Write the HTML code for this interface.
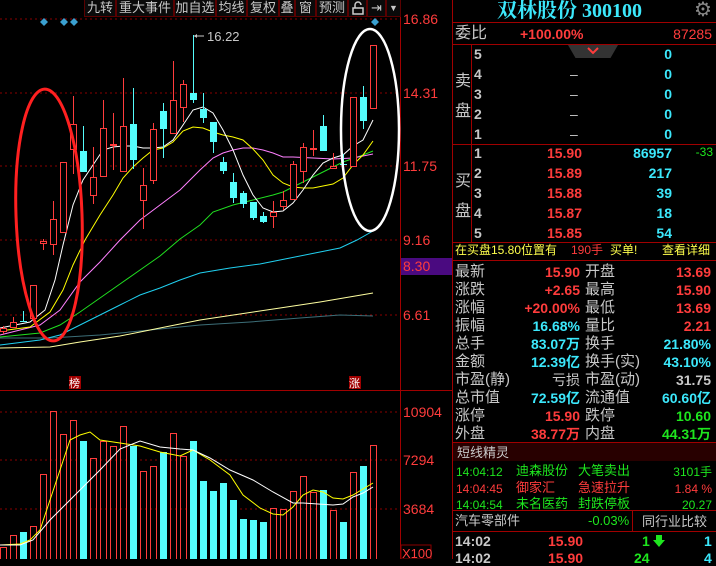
<!DOCTYPE html><html><head><meta charset="utf-8"><style>
*{margin:0;padding:0;box-sizing:border-box}
body{width:716px;height:559px;background:#000;overflow:hidden;position:relative;font-family:"Liberation Sans","Noto Sans CJK SC",sans-serif;color:#c8c8c8}
.a{position:absolute;white-space:nowrap;line-height:1}
.r{color:#ff3c3c}.c{color:#3ce8fc}.g{color:#1ee61e}.w{color:#c8c8c8}.y{color:#ffff4c}
.tb{position:absolute;top:0;height:17px;border:1px solid #5a0000;border-top:none;background:#0a0a0a;color:#c8c8c8;font-size:13px;text-align:center;line-height:16px}
.b{font-weight:bold}
</style></head><body>
<svg width="452" height="559" style="position:absolute;left:0;top:0">
<g stroke="#8a0000" stroke-dasharray="2,3" stroke-width="1">
<line x1="0" y1="19" x2="400" y2="19"/><line x1="0" y1="93" x2="400" y2="93"/><line x1="0" y1="166" x2="400" y2="166"/><line x1="0" y1="240" x2="400" y2="240"/><line x1="0" y1="315" x2="400" y2="315"/>
<line x1="0" y1="412" x2="400" y2="412"/><line x1="0" y1="460" x2="400" y2="460"/><line x1="0" y1="509" x2="400" y2="509"/>
</g>
<line x1="400.5" y1="0" x2="400.5" y2="559" stroke="#a00000"/>
<line x1="0" y1="390.5" x2="452" y2="390.5" stroke="#a00000"/>
<rect x="401" y="258" width="51" height="17" fill="#4a0a80"/>
<g font-family="Liberation Sans" font-size="14" fill="#ff3c3c">
<text x="403" y="24">16.86</text><text x="403" y="98">14.31</text><text x="403" y="171">11.75</text><text x="403" y="245">9.16</text><text x="403" y="271">8.30</text><text x="403" y="320">6.61</text>
<text x="403" y="417">10904</text><text x="403" y="465">7294</text><text x="403" y="514">3684</text></g>
<rect x="401" y="545" width="30" height="14" fill="none" stroke="#8a0000"/>
<text x="402" y="558" font-size="13" fill="#ff3c3c" font-family="Liberation Sans">X100</text>
<g fill="#3aa0d0"><path d="M44 18l4 4-4 4-4-4z"/><path d="M64 18l4 4-4 4-4-4z"/><path d="M74 18l4 4-4 4-4-4z"/><path d="M375 18l4 4-4 4-4-4z"/></g>
<g fill="none" stroke-width="1">
<polyline stroke="#3c6e78" points="0,338 50,338 100,335 150,330 200,325 250,322 300,318 340,315 373,316"/>
<polyline stroke="#ffffa0" points="0,348 50,347 80,342 120,336 160,328 200,320 240,314 280,308 320,302 373,293"/>
<polyline stroke="#20d0f0" points="0,345 40,340 60,335 80,325 100,315 120,305 140,295 160,288 180,280 200,273 230,268 260,264 290,258 320,252 340,248 357,240 373,231"/>
<polyline stroke="#20e020" points="0,337 40,333 60,325 80,312 100,298 120,284 140,270 160,256 180,239 200,225 213,212 233,205 253,200 273,195 283,192 303,182 323,172 343,162 363,155 373,151"/>
<polyline stroke="#ff80ff" points="0,335 40,325 60,310 80,282 100,262 120,240 140,220 160,205 180,190 200,170 213,158 223,153 233,150 243,148 253,148 263,150 273,153 283,157 293,157 313,158 333,159 353,158 373,154"/>
<polyline stroke="#ffff00" points="0,331 30,327 50,312 63,290 73,265 85,240 100,215 113,195 123,178 133,167 143,158 153,150 163,148 173,142 183,131 193,127 203,128 213,132 223,135 233,137 243,140 253,149 263,160 273,175 283,183 293,187 303,188 313,188 323,186 333,184 343,178 353,165 363,155 373,141"/>
<polyline stroke="#ffffff" points="0,328 30,322 45,310 55,280 63,245 73,205 83,180 93,165 103,150 113,147 123,146 133,146 143,148 153,148 163,147 173,140 183,125 193,110 203,107 213,113 223,130 233,150 243,175 253,195 263,208 273,212 283,211 293,203 303,190 313,175 323,163 333,158 343,155 353,146 363,140 373,120"/>
</g>
<g id="cd" stroke-width="1"></g>
<g id="vb"></g>
<g fill="none" stroke-width="1">
<polyline stroke="#ffff00" points="0,545 20,544 30,540 40,530 50,500 60,470 70,440 80,435 90,432 100,440 120,443 140,446 160,452 180,456 193,450 210,460 230,475 243,495 260,508 273,514 283,515 293,507 303,495 313,490 323,492 333,498 343,499 353,495 363,489 373,483"/>
<polyline stroke="#ffffff" points="0,545 20,545 33,540 50,520 70,500 85,485 100,470 120,449 140,441 160,447 180,449 193,450 210,458 230,470 253,480 273,492 293,503 303,503 333,505 343,504 353,497 363,493 373,487"/>
</g>
<ellipse cx="49" cy="215" rx="33" ry="126" fill="none" stroke="#ff2020" stroke-width="3" transform="rotate(-2 49 215)"/>
<ellipse cx="370" cy="130" rx="29" ry="101" fill="none" stroke="#ffffff" stroke-width="2.5"/>
<line x1="193.5" y1="35" x2="193.5" y2="93" stroke="#54fcfc"/>
<line x1="194" y1="36" x2="204" y2="36" stroke="#c8c8c8"/><path d="M194 36l3-2v4z" fill="#c8c8c8"/>
<text x="207" y="41" font-size="13" fill="#c8c8c8" font-family="Liberation Sans">16.22</text>
<rect x="69" y="376" width="12" height="13" fill="#a00000"/><text x="69" y="387" font-size="11" fill="#fff" font-family="Noto Sans CJK SC">榜</text>
<rect x="349" y="376" width="12" height="13" fill="#a00000"/><text x="349" y="387" font-size="11" fill="#fff" font-family="Noto Sans CJK SC">涨</text>
</svg>
<div class="tb" style="left:84px;width:32px">九转</div>
<div class="tb" style="left:116px;width:58px">重大事件</div>
<div class="tb" style="left:174px;width:42px">加自选</div>
<div class="tb" style="left:216px;width:31px">均线</div>
<div class="tb" style="left:247px;width:32px">复权</div>
<div class="tb" style="left:279px;width:16px">叠</div>
<div class="tb" style="left:295px;width:21px">窗</div>
<div class="tb" style="left:316px;width:32px">预测</div>
<div class="tb" style="left:348px;width:19px"><svg width="12" height="14" style="margin-top:1px"><path d="M3 7V4a3 3 0 0 1 6 0" fill="none" stroke="#ccc" stroke-width="1.5"/><rect x="1" y="7" width="10" height="6" fill="none" stroke="#ccc" stroke-width="1.5"/></svg></div>
<div class="tb" style="left:367px;width:19px">⇥</div>
<div class="tb" style="left:386px;width:15px;font-size:9px">▼</div>

<div style="position:absolute;left:452px;top:0;width:264px;height:559px;border-left:1px solid #a00000"></div>
<div class="a c b" style="left:497px;top:1px;font-size:20px;font-family:'Liberation Serif','Noto Serif CJK SC',serif">双林股份 300100</div>
<div class="a" style="left:694px;top:0px;font-size:20px;color:#888">⚙</div>
<div style="position:absolute;left:453px;top:22px;width:263px;height:1px;background:#a00000"></div>
<div class="a w" style="left:455px;top:26px;font-size:16px">委比</div>
<div class="a r b" style="left:520px;top:27px;font-size:14px">+100.00%</div>
<div class="a r" style="left:660px;top:27px;font-size:14px;width:52px;text-align:right">87285</div>
<div style="position:absolute;left:453px;top:44px;width:263px;height:1px;background:#a00000"></div>
<div style="position:absolute;left:568px;top:45px;width:50px;height:13px;background:#333;clip-path:polygon(0 0,100% 0,85% 100%,15% 100%)"></div>
<svg style="position:absolute;left:586px;top:47px" width="14" height="8"><path d="M2 1l5 5 5-5" fill="none" stroke="#ff3c3c" stroke-width="2"/></svg>
<div style="position:absolute;left:471px;top:45px;width:1px;height:198px;background:#a00000"></div>
<div style="position:absolute;left:453px;top:144px;width:263px;height:1px;background:#a00000"></div>
<div class="a w" style="left:455px;top:67px;font-size:16px;line-height:30px;white-space:normal;width:16px">卖<br>盘</div>
<div class="a w" style="left:455px;top:167px;font-size:16px;line-height:30px;white-space:normal;width:16px">买<br>盘</div>
<div class="a" style="left:474px;top:44px;font-size:14px;line-height:20px;white-space:pre;color:#c8c8c8;font-weight:bold">5
4
3
2
1</div>
<div class="a w" style="left:570px;top:44px;font-size:14px;line-height:20px;white-space:pre"> 
–
–
–
–</div>
<div class="a c b" style="left:640px;top:44px;font-size:14px;line-height:20px;white-space:pre;width:32px;text-align:right">0
0
0
0
0</div>
<div class="a" style="left:474px;top:143px;font-size:14px;line-height:20px;white-space:pre;font-weight:bold">1
2
3
4
5</div>
<div class="a r b" style="left:530px;top:143px;font-size:14px;line-height:20px;white-space:pre;width:52px;text-align:right">15.90
15.89
15.88
15.87
15.85</div>
<div class="a c b" style="left:610px;top:143px;font-size:14px;line-height:20px;white-space:pre;width:62px;text-align:right">86957
217
39
18
54</div>
<div class="a g" style="left:692px;top:146px;font-size:12px;width:21px;text-align:right">-33</div>
<div style="position:absolute;left:453px;top:242px;width:263px;height:1px;background:#a00000"></div>
<div class="a y" style="left:455px;top:244px;font-size:12px">在买盘15.80位置有</div>
<div class="a r" style="left:571px;top:244px;font-size:12px">190手</div>
<div class="a y" style="left:610px;top:244px;font-size:12px">买单!</div>
<div class="a y" style="left:662px;top:244px;font-size:12px">查看详细</div>
<div style="position:absolute;left:453px;top:260px;width:263px;height:1px;background:#a00000"></div>
<div class="a w" style="left:455px;top:263px;font-size:15px;line-height:18px;white-space:pre">最新
涨跌
涨幅
振幅
总手
金额
市盈(静)
总市值
涨停
外盘</div>
<div class="a b" style="left:500px;top:263px;font-size:14px;line-height:18px;white-space:pre;width:80px;text-align:right"><span class="r">15.90</span>
<span class="r">+2.65</span>
<span class="r">+20.00%</span>
<span class="c">16.68%</span>
<span class="c">83.07万</span>
<span class="c">12.39亿</span>
<span class="w" style="font-weight:normal">亏损</span>
<span class="c">72.59亿</span>
<span class="r">15.90</span>
<span class="r">38.77万</span></div>
<div class="a w" style="left:585px;top:263px;font-size:15px;line-height:18px;white-space:pre">开盘
最高
最低
量比
换手
换手(实)
市盈(动)
流通值
跌停
内盘</div>
<div class="a b" style="left:630px;top:263px;font-size:14px;line-height:18px;white-space:pre;width:81px;text-align:right"><span class="r">13.69</span>
<span class="r">15.90</span>
<span class="r">13.69</span>
<span class="r">2.21</span>
<span class="c">21.80%</span>
<span class="c">43.10%</span>
<span class="w">31.75</span>
<span class="c">60.60亿</span>
<span class="g">10.60</span>
<span class="g">44.31万</span></div>
<div style="position:absolute;left:453px;top:442px;width:263px;height:19px;background:#280000;border-top:1px solid #a00000"></div>
<div class="a w" style="left:457px;top:446px;font-size:13px">短线精灵</div>
<div class="a" style="left:456px;top:464px;font-size:12px;line-height:16.5px;white-space:pre"><span class="g">14:04:12</span>
<span class="r">14:04:45</span>
<span class="g">14:04:54</span></div>
<div class="a" style="left:516px;top:463px;font-size:13px;line-height:16.5px;white-space:pre"><span class="g">迪森股份</span>
<span class="r">御家汇</span>
<span class="g">未名医药</span></div>
<div class="a" style="left:578px;top:463px;font-size:13px;line-height:16.5px;white-space:pre"><span class="g">大笔卖出</span>
<span class="r">急速拉升</span>
<span class="g">封跌停板</span></div>
<div class="a" style="left:650px;top:464px;font-size:12px;line-height:16.5px;white-space:pre;width:62px;text-align:right"><span class="g">3101手</span>
<span class="r">1.84 %</span>
<span class="g">20.27</span></div>
<div style="position:absolute;left:453px;top:510px;width:263px;height:1px;background:#a00000"></div>
<div class="a w" style="left:455px;top:514px;font-size:13px">汽车零部件</div>
<div class="a g" style="left:588px;top:514px;font-size:13px">-0.03%</div>
<div style="position:absolute;left:632px;top:511px;width:1px;height:20px;background:#a00000"></div>
<div class="a w" style="left:642px;top:515px;font-size:13px">同行业比较</div>
<div style="position:absolute;left:453px;top:531px;width:263px;height:1px;background:#a00000"></div>
<div class="a w b" style="left:455px;top:534px;font-size:14px">14:02</div>
<div class="a r b" style="left:548px;top:534px;font-size:14px">15.90</div>
<div class="a g b" style="left:642px;top:534px;font-size:14px">1</div>
<svg style="position:absolute;left:653px;top:535px" width="12" height="12"><path d="M3 0h6v5h3l-6 7-6-7h3z" fill="#1ee61e"/></svg>
<div class="a c b" style="left:704px;top:534px;font-size:14px">1</div>
<div class="a w b" style="left:455px;top:551px;font-size:14px">14:02</div>
<div class="a r b" style="left:548px;top:551px;font-size:14px">15.90</div>
<div class="a g b" style="left:634px;top:551px;font-size:14px">24</div>
<div class="a c b" style="left:704px;top:551px;font-size:14px">4</div>
<script>
var C=[["r",328,331,326,334],["r",322,327,317,327],["c",321,322,311,322],["r",285,318,285,318],["r",241,243,239,250],["r",219,244,201,255],["r",162,232,162,232],["r",124,149,96,174],["c",151,172,126,172],["r",177,195,147,204],["r",128,176,100,176],["r",144,145,113,170],["r",126,171,78,171],["c",124,160,88,169],["r",185,200,168,229],["r",129,180,123,184],["c",111,129,103,158],["r",100,133,61,133],["r",84,107,80,122],["c",93,100,35,103],["c",109,118,93,123],["c",122,142,122,153],["c",162,171,157,174],["c",182,198,173,203],["c",193,204,191,208],["c",202,218,202,220],["c",216,222,212,223],["r",212,216,201,228],["r",200,206,191,210],["r",164,199,161,199],["r",147,171,143,183],["r",148,149,130,156],["c",126,151,115,151],["r",166,168,153,168],["c",164,165,154,167],["r",97,166,97,166],["c",97,121,86,129],["r",45,108,45,108]];
var V=[["r",547],["r",535],["c",532],["r",526],["r",474],["r",411],["r",434],["r",420],["c",441],["r",458],["r",441],["r",446],["r",426],["c",446],["r",471],["r",466],["c",452],["r",433],["r",456],["c",441],["c",481],["c",491],["c",483],["c",500],["c",519],["c",520],["c",522],["r",508],["r",509],["r",491],["r",476],["r",492],["c",490],["r",510],["c",522],["r",472],["c",466],["r",445]];
var R="#ff3c3c",CY="#54fcfc",s="",v="";
C.forEach(function(d,i){var x=3+10*i,col=d[0]=="r"?R:CY;
s+='<line x1="'+(x+.5)+'" y1="'+d[3]+'" x2="'+(x+.5)+'" y2="'+d[4]+'" stroke="'+col+'"/>';
var h=Math.max(1,d[2]-d[1]);
if(d[0]=="r")s+='<rect x="'+(x-2.5)+'" y="'+(d[1]+.5)+'" width="6" height="'+h+'" fill="#000" stroke="'+R+'"/>';
else s+='<rect x="'+(x-3)+'" y="'+d[1]+'" width="7" height="'+h+'" fill="'+CY+'"/>';});
V.forEach(function(d,i){var x=3+10*i;
if(d[0]=="r")v+='<rect x="'+(x-2.5)+'" y="'+(d[1]+.5)+'" width="6" height="'+(560-d[1])+'" fill="none" stroke="'+R+'"/>';
else v+='<rect x="'+(x-3)+'" y="'+d[1]+'" width="7" height="'+(560-d[1])+'" fill="'+CY+'"/>';});
document.getElementById("cd").innerHTML=s;document.getElementById("vb").innerHTML=v;
</script>
</body></html>
